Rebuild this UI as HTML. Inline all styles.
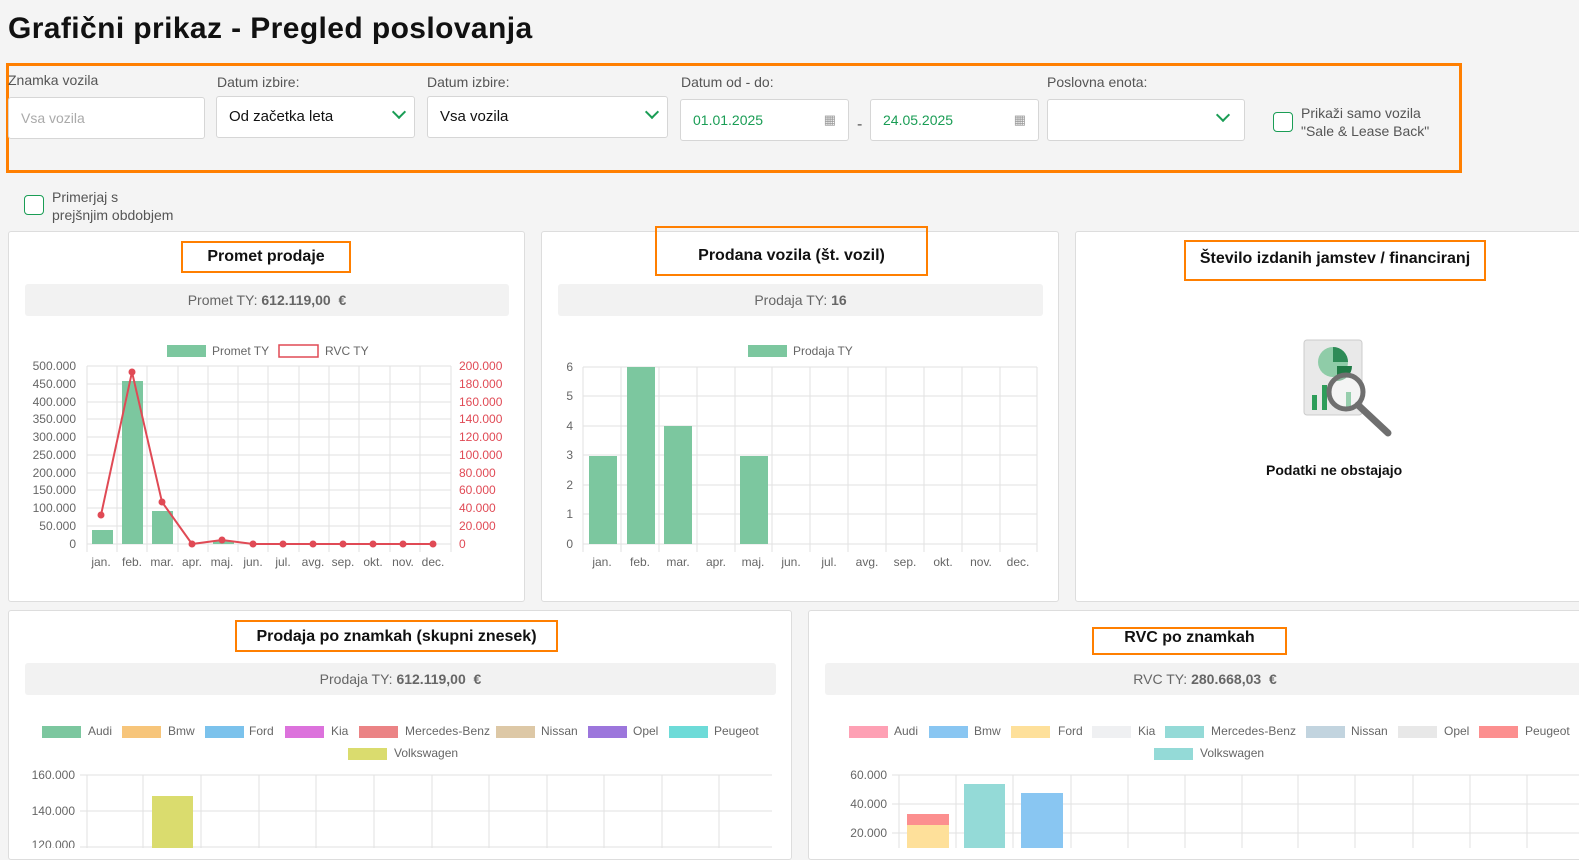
<!DOCTYPE html>
<html><head><meta charset="utf-8"><style>
*{box-sizing:border-box;margin:0;padding:0}
body{width:1579px;height:848px;overflow:hidden;background:#f4f4f4;font-family:"Liberation Sans",sans-serif;position:relative;color:#333}
.a{position:absolute}
.lbl{font-size:14px;color:#555}
.inp{position:absolute;background:#fff;border:1px solid #d6d6d6;border-radius:3px;height:42px;font-size:15px;padding:0 12px;line-height:40px}
.chev{position:absolute;right:10px;top:13px;width:10px;height:10px;border-right:2.5px solid #1a9d55;border-bottom:2.5px solid #1a9d55;transform:rotate(45deg);top:10px}
.card{position:absolute;background:#fff;border:1px solid #ddd;border-radius:3px}
.ob{position:absolute;border:2.5px solid #ff7f00;font-weight:bold;color:#111;font-size:16px;text-align:center}
.sum{position:absolute;background:#f2f2f2;border-radius:3px;height:32px;line-height:32px;text-align:center;font-size:14px;color:#666}
.cb{position:absolute;width:20px;height:20px;border:1.5px solid #1a9d55;border-radius:4px;background:#fff}
</style></head><body>
<div class="a" style="left:8px;top:12px;font-size:30px;font-weight:bold;color:#111;letter-spacing:0.4px">Grafični prikaz - Pregled poslovanja</div>
<div class="a" style="left:6px;top:63px;width:1456px;height:110px;border:3px solid #ff7f00"></div>
<div class="a lbl" style="left:8px;top:72px">Znamka vozila</div>
<div class="inp" style="left:8px;top:97px;width:197px;color:#aaa;font-size:14px">Vsa vozila</div>
<div class="a lbl" style="left:217px;top:74px">Datum izbire:</div>
<div class="inp" style="left:216px;top:96px;width:199px;color:#111">Od začetka leta<span class="chev"></span></div>
<div class="a lbl" style="left:427px;top:74px">Datum izbire:</div>
<div class="inp" style="left:427px;top:96px;width:241px;color:#111">Vsa vozila<span class="chev"></span></div>
<div class="a lbl" style="left:681px;top:74px">Datum od - do:</div>
<div class="inp" style="left:680px;top:99px;width:169px;color:#1a9d55;font-size:14px">01.01.2025<span class="a" style="right:12px;color:#999;font-size:13px">▦</span></div>
<div class="a" style="left:857px;top:116px;color:#555">-</div>
<div class="inp" style="left:870px;top:99px;width:169px;color:#1a9d55;font-size:14px">24.05.2025<span class="a" style="right:12px;color:#999;font-size:13px">▦</span></div>
<div class="a lbl" style="left:1047px;top:74px">Poslovna enota:</div>
<div class="inp" style="left:1047px;top:99px;width:198px"><span class="chev" style="right:16px"></span></div>
<div class="cb" style="left:1273px;top:112px"></div>
<div class="a lbl" style="left:1301px;top:104px;line-height:18px">Prikaži samo vozila<br>"Sale &amp; Lease Back"</div>
<div class="cb" style="left:24px;top:195px"></div>
<div class="a lbl" style="left:52px;top:188px;line-height:18px">Primerjaj s<br>prejšnjim obdobjem</div>

<div class="card" style="left:8px;top:231px;width:517px;height:371px"></div>
<div class="card" style="left:541px;top:231px;width:518px;height:371px"></div>
<div class="card" style="left:1075px;top:231px;width:510px;height:371px"></div>
<div class="card" style="left:8px;top:610px;width:784px;height:250px"></div>
<div class="card" style="left:808px;top:610px;width:780px;height:250px"></div>

<div class="ob" style="left:181px;top:241px;width:170px;height:32px;line-height:28px">Promet prodaje</div>
<div class="ob" style="left:655px;top:226px;width:273px;height:50px;padding-top:19px">Prodana vozila (št. vozil)</div>
<div class="ob" style="left:1184px;top:240px;width:302px;height:41px;line-height:34px">Število izdanih jamstev / financiranj</div>
<div class="ob" style="left:235px;top:620px;width:323px;height:32px;line-height:29px">Prodaja po znamkah (skupni znesek)</div>
<div class="ob" style="left:1092px;top:627px;width:195px;height:28px;line-height:18px">RVC po znamkah</div>

<div class="sum" style="left:25px;top:284px;width:484px">Promet TY: <b>612.119,00 &nbsp;€</b></div>
<div class="sum" style="left:558px;top:284px;width:485px">Prodaja TY: <b>16</b></div>
<div class="sum" style="left:25px;top:663px;width:751px">Prodaja TY: <b>612.119,00 &nbsp;€</b></div>
<div class="sum" style="left:825px;top:663px;width:760px">RVC TY: <b>280.668,03 &nbsp;€</b></div>

<div class="a" style="left:1266px;top:462px;font-size:14px;font-weight:bold;color:#111">Podatki ne obstajajo</div>

<svg class="a" style="left:0;top:0" width="1579" height="848" font-family="Liberation Sans, sans-serif" font-size="12" fill="#666">
<!-- no-data icon -->
<rect x="1304" y="340" width="58" height="75" rx="3" fill="#e9e9e9" stroke="#ccc"/>
<circle cx="1333" cy="362" r="15" fill="#8fcca8"/>
<path d="M1333 362 L1333 347 A15 15 0 0 1 1348 362Z" fill="#2e8b57"/>
<path d="M1337 366 L1352 366 A15 15 0 0 1 1337 381Z" fill="#1f7a45"/>
<rect x="1312" y="395" width="5" height="15" fill="#2e9d5a"/><rect x="1322" y="385" width="5" height="25" fill="#2e9d5a"/><rect x="1346" y="392" width="5" height="18" fill="#2e9d5a"/>
<circle cx="1346" cy="392" r="17" fill="rgba(255,255,255,.5)" stroke="#6f6f6f" stroke-width="5"/>
<line x1="1358" y1="405" x2="1388" y2="433" stroke="#6f6f6f" stroke-width="7" stroke-linecap="round"/>

<!-- chart 1 -->
<g stroke="#e2e2e2">
<line x1="87" y1="366" x2="451" y2="366"/><line x1="87" y1="384" x2="451" y2="384"/><line x1="87" y1="402" x2="451" y2="402"/><line x1="87" y1="419" x2="451" y2="419"/><line x1="87" y1="437" x2="451" y2="437"/><line x1="87" y1="455" x2="451" y2="455"/><line x1="87" y1="473" x2="451" y2="473"/><line x1="87" y1="490" x2="451" y2="490"/><line x1="87" y1="508" x2="451" y2="508"/><line x1="87" y1="526" x2="451" y2="526"/><line x1="87" y1="544" x2="451" y2="544"/>
<line x1="87" y1="366" x2="87" y2="552"/><line x1="117" y1="366" x2="117" y2="552"/><line x1="147" y1="366" x2="147" y2="552"/><line x1="178" y1="366" x2="178" y2="552"/><line x1="208" y1="366" x2="208" y2="552"/><line x1="238" y1="366" x2="238" y2="552"/><line x1="268" y1="366" x2="268" y2="552"/><line x1="299" y1="366" x2="299" y2="552"/><line x1="329" y1="366" x2="329" y2="552"/><line x1="359" y1="366" x2="359" y2="552"/><line x1="390" y1="366" x2="390" y2="552"/><line x1="420" y1="366" x2="420" y2="552"/><line x1="451" y1="366" x2="451" y2="552"/>
</g>
<rect x="92" y="530" width="21" height="14" fill="#7cc79f"/><rect x="122" y="381" width="21" height="163" fill="#7cc79f"/><rect x="152" y="511" width="21" height="33" fill="#7cc79f"/><rect x="213" y="541" width="21" height="3" fill="#7cc79f"/>
<polyline points="101,515 132,372 162,502 192,544 222,540 253,544 283,544 313,544 343,544 373,544 403,544 433,544" fill="none" stroke="#e04a55" stroke-width="2"/>
<g fill="#e04a55"><circle cx="101" cy="515" r="3.5"/><circle cx="132" cy="372" r="3.5"/><circle cx="162" cy="502" r="3.5"/><circle cx="192" cy="544" r="3.5"/><circle cx="222" cy="540" r="3.5"/><circle cx="253" cy="544" r="3.5"/><circle cx="283" cy="544" r="3.5"/><circle cx="313" cy="544" r="3.5"/><circle cx="343" cy="544" r="3.5"/><circle cx="373" cy="544" r="3.5"/><circle cx="403" cy="544" r="3.5"/><circle cx="433" cy="544" r="3.5"/></g>
<rect x="167" y="345" width="39" height="12" fill="#7cc79f"/><text x="212" y="355">Promet TY</text>
<rect x="279" y="345" width="39" height="12" fill="#fff" stroke="#e04a55" stroke-width="1.5"/><text x="325" y="355">RVC TY</text>
<g text-anchor="end"><text x="76" y="370">500.000</text><text x="76" y="388">450.000</text><text x="76" y="406">400.000</text><text x="76" y="423">350.000</text><text x="76" y="441">300.000</text><text x="76" y="459">250.000</text><text x="76" y="477">200.000</text><text x="76" y="494">150.000</text><text x="76" y="512">100.000</text><text x="76" y="530">50.000</text><text x="76" y="548">0</text></g>
<g fill="#e04a55"><text x="459" y="370">200.000</text><text x="459" y="388">180.000</text><text x="459" y="406">160.000</text><text x="459" y="423">140.000</text><text x="459" y="441">120.000</text><text x="459" y="459">100.000</text><text x="459" y="477">80.000</text><text x="459" y="494">60.000</text><text x="459" y="512">40.000</text><text x="459" y="530">20.000</text><text x="459" y="548">0</text></g>
<g text-anchor="middle"><text x="101" y="566">jan.</text><text x="132" y="566">feb.</text><text x="162" y="566">mar.</text><text x="192" y="566">apr.</text><text x="222" y="566">maj.</text><text x="253" y="566">jun.</text><text x="283" y="566">jul.</text><text x="313" y="566">avg.</text><text x="343" y="566">sep.</text><text x="373" y="566">okt.</text><text x="403" y="566">nov.</text><text x="433" y="566">dec.</text></g>

<!-- chart 2 -->
<g stroke="#e2e2e2">
<line x1="583" y1="367" x2="1037" y2="367"/><line x1="583" y1="396" x2="1037" y2="396"/><line x1="583" y1="426" x2="1037" y2="426"/><line x1="583" y1="455" x2="1037" y2="455"/><line x1="583" y1="485" x2="1037" y2="485"/><line x1="583" y1="514" x2="1037" y2="514"/><line x1="583" y1="544" x2="1037" y2="544"/>
<line x1="583" y1="367" x2="583" y2="552"/><line x1="621" y1="367" x2="621" y2="552"/><line x1="659" y1="367" x2="659" y2="552"/><line x1="697" y1="367" x2="697" y2="552"/><line x1="735" y1="367" x2="735" y2="552"/><line x1="772" y1="367" x2="772" y2="552"/><line x1="810" y1="367" x2="810" y2="552"/><line x1="848" y1="367" x2="848" y2="552"/><line x1="886" y1="367" x2="886" y2="552"/><line x1="924" y1="367" x2="924" y2="552"/><line x1="962" y1="367" x2="962" y2="552"/><line x1="1000" y1="367" x2="1000" y2="552"/><line x1="1037" y1="367" x2="1037" y2="552"/>
</g>
<rect x="589" y="456" width="28" height="88" fill="#7cc79f"/><rect x="627" y="367" width="28" height="177" fill="#7cc79f"/><rect x="664" y="426" width="28" height="118" fill="#7cc79f"/><rect x="740" y="456" width="28" height="88" fill="#7cc79f"/>
<rect x="748" y="345" width="39" height="12" fill="#7cc79f"/><text x="793" y="355">Prodaja TY</text>
<g text-anchor="end"><text x="573" y="371">6</text><text x="573" y="400">5</text><text x="573" y="430">4</text><text x="573" y="459">3</text><text x="573" y="489">2</text><text x="573" y="518">1</text><text x="573" y="548">0</text></g>
<g text-anchor="middle"><text x="602" y="566">jan.</text><text x="640" y="566">feb.</text><text x="678" y="566">mar.</text><text x="716" y="566">apr.</text><text x="753" y="566">maj.</text><text x="791" y="566">jun.</text><text x="829" y="566">jul.</text><text x="867" y="566">avg.</text><text x="905" y="566">sep.</text><text x="943" y="566">okt.</text><text x="981" y="566">nov.</text><text x="1018" y="566">dec.</text></g>

<!-- chart 3 -->
<g stroke="#e2e2e2">
<line x1="80" y1="775" x2="772" y2="775"/><line x1="80" y1="811" x2="772" y2="811"/><line x1="80" y1="847" x2="772" y2="847"/>
<line x1="87" y1="775" x2="87" y2="848"/><line x1="143" y1="775" x2="143" y2="848"/><line x1="201" y1="775" x2="201" y2="848"/><line x1="259" y1="775" x2="259" y2="848"/><line x1="316" y1="775" x2="316" y2="848"/><line x1="374" y1="775" x2="374" y2="848"/><line x1="432" y1="775" x2="432" y2="848"/><line x1="489" y1="775" x2="489" y2="848"/><line x1="547" y1="775" x2="547" y2="848"/><line x1="604" y1="775" x2="604" y2="848"/><line x1="662" y1="775" x2="662" y2="848"/><line x1="719" y1="775" x2="719" y2="848"/>
</g>
<rect x="152" y="796" width="41" height="60" fill="#dadc6e"/>
<g text-anchor="end"><text x="75" y="779">160.000</text><text x="75" y="815">140.000</text><text x="75" y="849">120.000</text></g>
<rect x="42" y="726" width="39" height="12" fill="#7cc79f"/><text x="88" y="735">Audi</text>
<rect x="122" y="726" width="39" height="12" fill="#f7c57a"/><text x="168" y="735">Bmw</text>
<rect x="205" y="726" width="39" height="12" fill="#7bc2ec"/><text x="249" y="735">Ford</text>
<rect x="285" y="726" width="39" height="12" fill="#dc72dc"/><text x="331" y="735">Kia</text>
<rect x="359" y="726" width="39" height="12" fill="#eb8385"/><text x="405" y="735" textLength="85">Mercedes-Benz</text>
<rect x="496" y="726" width="39" height="12" fill="#ddc8a6"/><text x="541" y="735">Nissan</text>
<rect x="588" y="726" width="39" height="12" fill="#9c76dc"/><text x="633" y="735">Opel</text>
<rect x="669" y="726" width="39" height="12" fill="#6ddbd8"/><text x="714" y="735">Peugeot</text>
<rect x="348" y="748" width="39" height="12" fill="#dadc6e"/><text x="394" y="757">Volkswagen</text>

<!-- chart 4 -->
<g stroke="#e2e2e2">
<line x1="892" y1="775" x2="1579" y2="775"/><line x1="892" y1="804" x2="1579" y2="804"/><line x1="892" y1="833" x2="1579" y2="833"/>
<line x1="899" y1="775" x2="899" y2="848"/><line x1="956" y1="775" x2="956" y2="848"/><line x1="1013" y1="775" x2="1013" y2="848"/><line x1="1071" y1="775" x2="1071" y2="848"/><line x1="1128" y1="775" x2="1128" y2="848"/><line x1="1185" y1="775" x2="1185" y2="848"/><line x1="1242" y1="775" x2="1242" y2="848"/><line x1="1298" y1="775" x2="1298" y2="848"/><line x1="1355" y1="775" x2="1355" y2="848"/><line x1="1413" y1="775" x2="1413" y2="848"/><line x1="1470" y1="775" x2="1470" y2="848"/><line x1="1527" y1="775" x2="1527" y2="848"/>
</g>
<rect x="907" y="825" width="42" height="30" fill="#fee09a"/><rect x="907" y="814" width="42" height="11" fill="#fc8f8f"/>
<rect x="964" y="784" width="41" height="70" fill="#94dad7"/>
<rect x="1021" y="793" width="42" height="60" fill="#89c6f2"/>
<g text-anchor="end"><text x="887" y="779">60.000</text><text x="887" y="808">40.000</text><text x="887" y="837">20.000</text></g>
<rect x="849" y="726" width="39" height="12" fill="#fea0b4"/><text x="894" y="735">Audi</text>
<rect x="929" y="726" width="39" height="12" fill="#89c6f2"/><text x="974" y="735">Bmw</text>
<rect x="1011" y="726" width="39" height="12" fill="#fee09a"/><text x="1058" y="735">Ford</text>
<rect x="1092" y="726" width="39" height="12" fill="#eff0f2"/><text x="1138" y="735">Kia</text>
<rect x="1165" y="726" width="39" height="12" fill="#94dad7"/><text x="1211" y="735" textLength="85">Mercedes-Benz</text>
<rect x="1306" y="726" width="39" height="12" fill="#c2d4df"/><text x="1351" y="735">Nissan</text>
<rect x="1398" y="726" width="39" height="12" fill="#e8e8e8"/><text x="1444" y="735">Opel</text>
<rect x="1479" y="726" width="39" height="12" fill="#fc8f8f"/><text x="1525" y="735">Peugeot</text>
<rect x="1154" y="748" width="39" height="12" fill="#94dad7"/><text x="1200" y="757">Volkswagen</text>
</svg>
</body></html>
